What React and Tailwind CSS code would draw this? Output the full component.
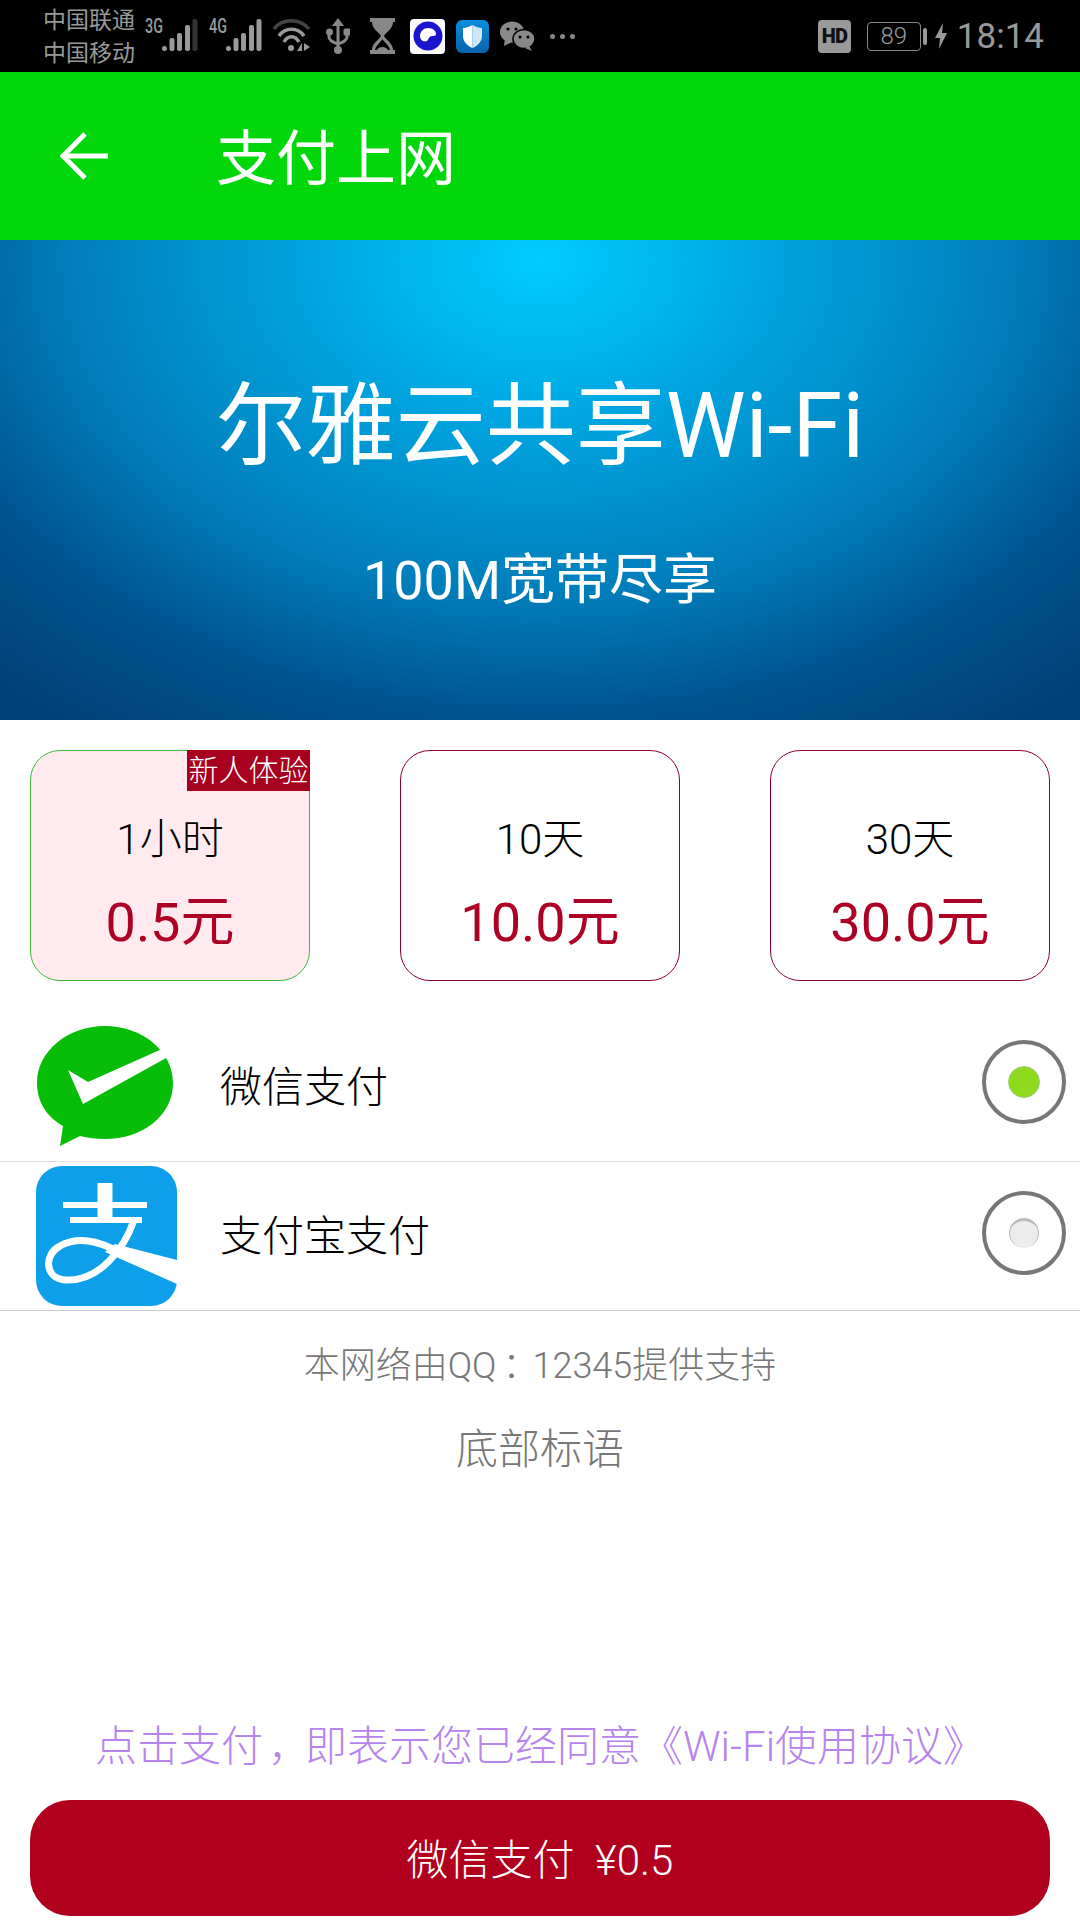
const font = { fontFamily: 'Roboto, "Noto Sans CJK SC", sans-serif' };

function Signal({ label, lastDim }) {
  return (
    <div className="relative w-[54px] h-[40px]">
      <span className="absolute left-0 top-[-1px] text-[20px] leading-[22px] font-medium text-[#999] origin-left scale-x-[0.72]">{label}</span>
      <svg width="54" height="40" viewBox="0 0 54 40" fill="#999">
        <rect x="17" y="30" width="5" height="5" rx="2.5" />
        <rect x="24.5" y="22" width="5" height="13" rx="2" />
        <rect x="32" y="17" width="5" height="18" rx="2" />
        <rect x="40" y="9" width="5" height="26" rx="2" />
        <rect x="47.5" y="3" width="5" height="32" rx="2" fill={lastDim ? "#333" : "#999"} />
      </svg>
    </div>
  );
}

function StatusBar() {
  return (
    <div className="h-[72px] bg-black flex items-center pl-[43px] pr-[36px] text-[#999]">
      <div className="w-[102px] text-[23px] leading-[33px] whitespace-nowrap pt-[2px]">
        <div>中国联通</div>
        <div>中国移动</div>
      </div>
      <Signal label="3G" lastDim />
      <div className="w-[10px]" />
      <Signal label="4G" />
      <svg className="ml-[9px]" width="40" height="40" viewBox="0 0 40 40" fill="none" stroke="#999" strokeWidth="3.5">
        <path d="M2 13 C10 2 28 2 37 13" stroke="#444" />
        <path d="M7 20 C13 11 26 11 32 20" />
        <path d="M12 26 C16 19 23 19 27 26" />
        <circle cx="19" cy="32" r="3" fill="#999" stroke="none" />
        <path d="M30 27 V35 H25 Z M32 27 V35 L38 31 Z" fill="#999" stroke="none" />
      </svg>
      <svg className="ml-[14px]" width="24" height="40" viewBox="0 0 24 40" fill="none" stroke="#888" strokeWidth="3">
        <path d="M12 2 L6 10 H18 Z" fill="#888" stroke="none" />
        <path d="M12 8 V32" />
        <path d="M3 17 V21 Q3 25 12 28 Q21 25 21 21 V17" />
        <circle cx="3.5" cy="16" r="3.5" fill="#888" stroke="none" />
        <rect x="17.5" y="12.5" width="7" height="7" rx="1.5" fill="#888" stroke="none" />
        <circle cx="12" cy="34" r="4" fill="#888" stroke="none" />
      </svg>
      <svg className="ml-[20px]" width="25" height="38" viewBox="0 0 25 38">
        <path d="M0 1 H25 V5 H23 C23 12 16 15 14 19 C16 23 23 26 23 33 H25 V37 H0 V33 H2 C2 26 9 23 11 19 C9 15 2 12 2 5 H0 Z" fill="#888" />
        <path d="M12.5 22 C11 25 6 28 5 33 H20 C19 28 14 25 12.5 22 Z" fill="#000" />
        <path d="M7 33 C9 29 16 29 18 33 Z" fill="#888" />
      </svg>
      <div className="ml-[15px] w-[35px] h-[35px] rounded-[4px] bg-white flex items-center justify-center">
        <svg width="30" height="30" viewBox="0 0 30 30">
          <circle cx="15" cy="15" r="14.5" fill="#1a14cc" />
          <path d="M7 15 C7 10 11 7 15 7 C20 7 23 10 23 13 C23 15 21 15 19 15 C16 15 16 18 14 20 C10 21 7 19 7 15 Z" fill="#fff" />
        </svg>
      </div>
      <div className="ml-[11px] w-[33px] h-[33px] rounded-[6px] bg-gradient-to-b from-[#0c8ddc] to-[#0663ad] flex items-center justify-center">
        <svg width="21" height="25" viewBox="0 0 21 25">
          <path d="M10.5 1 C7 3 4 4 1 4 V12 C1 18 6 22 10.5 24 Z" fill="#fff" />
          <path d="M10.5 1 C14 3 17 4 20 4 V12 C20 18 15 22 10.5 24 Z" fill="#cfe6f7" />
        </svg>
      </div>
      <svg className="ml-[11px]" width="35" height="30" viewBox="0 0 35 30">
        <ellipse cx="12" cy="11" rx="12" ry="10.5" fill="#888" />
        <path d="M5 17 L4 25 L12 21 Z" fill="#888" />
        <ellipse cx="24" cy="18" rx="11" ry="9.5" fill="#888" stroke="#000" strokeWidth="1.5" />
        <path d="M29 25 L32 30 L25 27 Z" fill="#888" />
        <circle cx="8" cy="8" r="1.6" fill="#000" />
        <circle cx="16" cy="8" r="1.6" fill="#000" />
        <circle cx="20" cy="16" r="1.5" fill="#000" />
        <circle cx="28" cy="16" r="1.5" fill="#000" />
      </svg>
      <div className="ml-[15px] flex gap-[5px]">
        <span className="w-[5px] h-[5px] rounded-full bg-[#888]" />
        <span className="w-[5px] h-[5px] rounded-full bg-[#888]" />
        <span className="w-[5px] h-[5px] rounded-full bg-[#888]" />
      </div>
      <div className="ml-auto flex items-center">
        <div className="w-[33px] h-[33px] rounded-[4px] bg-[#999] flex items-center justify-center text-[#111] text-[20px] font-black tracking-[-1px]">HD</div>
        <div className="ml-[16px] w-[54px] h-[29px] rounded-[4px] border-[1.5px] border-[#888] flex items-center justify-center text-[24px] font-light leading-none">89</div>
        <div className="ml-[2px] w-[4px] h-[17px] rounded-[2px] bg-[#999]" />
        <svg className="ml-[8px]" width="12" height="28" viewBox="0 0 12 26">
          <path d="M8 0 L0 15 H5 L4 26 L12 10 H7 Z" fill="#999" />
        </svg>
        <div className="ml-[10px] text-[35px] leading-none">18:14</div>
      </div>
    </div>
  );
}

function PlanCard({ time, price, active }) {
  return (
    <div className={`relative w-[280px] h-[231px] rounded-[30px] border flex flex-col items-center ${active ? "border-[#3dba3d] bg-[#ffeaef]" : "border-[#8f0028] bg-white"}`}>
      {active && (
        <div className="absolute right-[-1px] top-[-1px] w-[123px] h-[41px] bg-[#a8001f] text-white text-[30px] font-light leading-[41px] text-center whitespace-nowrap">新人体验</div>
      )}
      <div className="mt-[59px] text-[42px] font-light leading-[60px] text-black">{time}</div>
      <div className="mt-[22px] text-[54px] leading-[62px] text-[#ae0025]">{price}</div>
    </div>
  );
}

function Radio({ on }) {
  return (
    <div className="mb-[7px] w-[84px] h-[84px] rounded-full border-[4px] border-[#777] bg-white flex items-center justify-center">
      {on ? (
        <div className="w-[32px] h-[32px] rounded-full bg-[#8ddb1c] border border-[#a9c98a]" />
      ) : (
        <div className="w-[30px] h-[30px] rounded-full bg-[#ececec] border-t-[3px] border-l border-r border-[#bbb]" />
      )}
    </div>
  );
}

function WechatLogo() {
  return (
    <svg width="178" height="150" viewBox="0 0 178 150">
      <path d="M37 72 C37 40 68 15 105 15 C142 15 173 40 173 72 C173 105 142 128 105 128 C96 128 88 127 80 125 L60 135 L63 115 C47 106 37 91 37 72 Z" fill="#07bd07" />
      <path d="M68 59 L88 71 L162 38 L168 46 L83 93 Z" fill="#fff" />
    </svg>
  );
}

function AlipayLogo() {
  return (
    <svg width="178" height="148" viewBox="0 0 178 148">
      <rect x="36" y="4" width="141" height="140" rx="26" fill="#0d9fe9" />
      <g fill="none" stroke="#fff">
        <path d="M63 43 H147" strokeWidth="6" />
        <path d="M70 58 H142" strokeWidth="6" />
        <path d="M105 21 V58" strokeWidth="15" />
        <path d="M134 58 C125 85 100 120 65 118 C44 116 44 92 60 84 C85 70 110 85 140 100" strokeWidth="7" />
      </g>
      <path d="M115 82 L177 98 V122 L105 90 Z" fill="#fff" />
    </svg>
  );
}

export default function App() {
  return (
    <div className="w-[1080px] h-[1920px] bg-white flex flex-col overflow-hidden" style={font}>
      <StatusBar />
      <div className="h-[168px] bg-[#02d70c] flex items-center text-white">
        <svg className="ml-[60px]" width="48" height="48" viewBox="0 0 48 48" fill="none" stroke="#fff" strokeWidth="5">
          <path d="M25 2 L3 24 L25 46" />
          <path d="M3 24 H48" />
        </svg>
        <div className="ml-[108px] pt-[8px] text-[60px] leading-none">支付上网</div>
      </div>
      <div className="h-[480px] flex flex-col items-center text-white bg-[radial-gradient(ellipse_820px_580px_at_50%_20px,#00ccff_0%,#00a2de_30%,#007dba_58%,#00548f_78%,#003f78_100%)]">
        <div className="mt-[129px] text-[90px] leading-[115px]">尔雅云共享Wi-Fi</div>
        <div className="mt-[62px] text-[54px] leading-[70px]">100M宽带尽享</div>
      </div>
      <div className="mt-[30px] px-[30px] flex justify-between">
        <PlanCard time="1小时" price="0.5元" active />
        <PlanCard time="10天" price="10.0元" />
        <PlanCard time="30天" price="30.0元" />
      </div>
      <div className="mt-[29px] h-[152px] flex items-center border-b border-[#ddd]">
        <WechatLogo />
        <div className="ml-[42px] pt-[4px] text-[42px] font-light text-black">微信支付</div>
        <div className="ml-auto mr-[14px]"><Radio on /></div>
      </div>
      <div className="h-[149px] flex items-center border-b border-[#ccc]">
        <AlipayLogo />
        <div className="ml-[42px] text-[42px] font-light text-black">支付宝支付</div>
        <div className="ml-auto mr-[14px]"><Radio /></div>
      </div>
      <div className="mt-[30px] text-center text-[36px] leading-[50px] font-light text-[#777]">本网络由QQ<span className="ml-[6px] tracking-[-6px]">：</span>12345提供支持</div>
      <div className="mt-[34px] text-center text-[42px] leading-[50px] font-light text-[#777]">底部标语</div>
      <div className="mt-auto text-center text-[42px] leading-[56px] font-light text-[#b784ee] whitespace-nowrap">点击支付<span className="ml-[5px] tracking-[-5px]">，</span>即表示您已经同意《Wi-Fi使用协议》</div>
      <div className="mt-[25px] mb-[4px] mx-[30px] h-[116px] pt-[4px] rounded-[40px] bg-[#b0001e] text-white text-[42px] font-light flex items-center justify-center whitespace-pre">微信支付  ¥0.5</div>
    </div>
  );
}
